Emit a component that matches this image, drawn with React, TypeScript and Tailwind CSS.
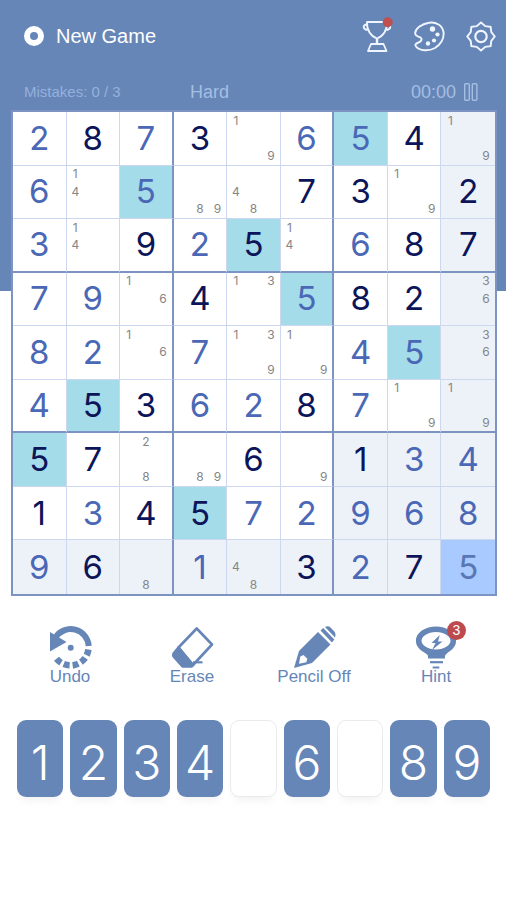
import { useState } from 'react';
import clsx from 'clsx';

// "8" = given, "2u" = entered by the player, "n19" = pencil notes 1 and 9
const PUZZLE = [
  ['2u', '8', '7u', '3', 'n19', '6u', '5u', '4', 'n19'],
  ['6u', 'n14', '5u', 'n89', 'n48', '7', '3', 'n19', '2'],
  ['3u', 'n14', '9', '2u', '5', 'n14', '6u', '8', '7'],
  ['7u', '9u', 'n16', '4', 'n13', '5u', '8', '2', 'n36'],
  ['8u', '2u', 'n16', '7u', 'n139', 'n19', '4u', '5u', 'n36'],
  ['4u', '5', '3', '6u', '2u', '8', '7u', 'n19', 'n19'],
  ['5', '7', 'n28', 'n89', '6', 'n9', '1', '3u', '4u'],
  ['1', '3u', '4', '5', '7u', '2u', '9u', '6u', '8u'],
  ['9u', '6', 'n8', '1u', 'n48', '3', '2u', '7', '5u'],
];

const DIGITS = ['1', '2', '3', '4', '5', '6', '7', '8', '9'];

const valueOf = (cell: string) => (cell.startsWith('n') ? '' : cell[0]);

const TrophyIcon = () => (
  <svg viewBox="0 0 32 32" className="w-8 h-8 overflow-visible" fill="none" stroke="currentColor" strokeWidth="1.8" strokeLinejoin="round">
    <path d="M6 2H26C26.500 10 22 16.500 16 18.500C10 16.500 5.500 10 6 2Z" />
    <path d="M6 4.500C1.500 4.500 1.500 9 6.500 10M26 4.500C30.500 4.500 30.500 9 25.500 10" />
    <path d="M16 18.500V24" strokeWidth="2.400" />
    <path d="M10 24H22.500L25.500 31H7Z" />
    <circle cx="26.700" cy="2.300" r="5" fill="#c0504f" stroke="none" />
  </svg>
);

const PaletteIcon = () => (
  <svg viewBox="0 0 32 32" className="w-8 h-8" fill="none" stroke="currentColor" strokeWidth="1.9" strokeLinejoin="round">
    <path d="M16 2.700C23 1.500 29.500 5.500 30.500 12C31.500 19 27 25 22 28C15.500 31.500 6.500 31 3 26.500C1.500 24.500 3 23.500 5.500 22.500C8.500 21.500 9.500 19 7.500 17.500C6 16.500 2.500 16.500 2.200 13.500C1.800 9 8.500 3.800 16 2.700Z" />
    <g fill="currentColor" stroke="none">
      <circle cx="19.500" cy="9" r="2.700" />
      <circle cx="24.500" cy="14.500" r="2.100" />
      <circle cx="21" cy="20.500" r="2.100" />
      <circle cx="15" cy="23.500" r="2.200" />
    </g>
  </svg>
);

const GearIcon = () => (
  <svg viewBox="0 0 32 32" className="w-8 h-8" fill="none" stroke="currentColor" strokeWidth="1.9" strokeLinejoin="miter">
    <path d="M16 2.500L20.300 6.200L25.600 6.900L26.300 12.200L29.700 16.500L26.300 20.800L25.600 26.100L20.300 26.800L16 30.500L11.700 26.800L6.400 26.100L5.700 20.800L2.300 16.500L5.700 12.200L6.400 6.900L11.700 6.200Z" />
    <circle cx="16" cy="16.500" r="5.700" strokeWidth="2.200" />
  </svg>
);

const PauseIcon = () => (
  <svg viewBox="0 0 14 18" className="w-[14px] h-[18px]" fill="none" stroke="currentColor" strokeWidth="1.4">
    <rect x="0.700" y="0.700" width="4.600" height="16.600" rx="1" />
    <rect x="8.300" y="0.700" width="4.600" height="16.600" rx="1" />
  </svg>
);

const UndoIcon = () => (
  <svg viewBox="0 0 44 42" className="w-[44px] h-[42px] overflow-visible" fill="none" stroke="currentColor">
    <path d="M7.500 12.500A18 18 0 0 1 40.700 21" strokeWidth="6" />
    <path d="M2 7V26.500L18.500 17Z" fill="currentColor" stroke="none" />
    <path d="M40.400 24.500A18 18 0 0 1 7 31.500" strokeWidth="6.500" strokeDasharray="6 3" />
    <circle cx="22.700" cy="22.700" r="3" fill="currentColor" stroke="none" />
  </svg>
);

const EraseIcon = () => (
  <svg viewBox="0 0 44 42" className="w-[44px] h-[42px] overflow-visible" fill="none" stroke="currentColor" strokeWidth="2.6" strokeLinejoin="round">
    <path d="M26.700 3.500L42 19.500L23 40L8.500 22.500Z" />
    <path d="M8.500 22.500L3.500 28.500Q2.800 30.500 4 32L12.500 41.500H21.500L23 40Z" fill="currentColor" />
    <path d="M23 37.300H32.500" strokeWidth="2.200" />
  </svg>
);

const PencilIcon = () => (
  <svg viewBox="0 0 44 42" className="w-[44px] h-[42px] overflow-visible" fill="currentColor">
    <path d="M26 7L38.500 19.500L20 38L2 43L7 26Z" />
    <path d="M28.500 5.500L31.300 3L42.300 14.500L40 17.500Z" />
    <path d="M33 2C35 0.800 37 1 38.500 2.500L42.500 6.700C43.800 8.300 43.600 10.500 43 12.500Z" />
    <path d="M8.300 31.500L11.500 30L15.300 33.800L14.300 37.300L7 38.800Z" fill="#fff" />
  </svg>
);

const HintIcon = () => (
  <svg viewBox="0 0 44 42" className="w-[44px] h-[42px] overflow-visible" fill="none" stroke="currentColor">
    <ellipse cx="22" cy="15.700" rx="17.300" ry="11.500" strokeWidth="5.600" />
    <path d="M7 24L14 30.500V33.500H31V30.500L37 24C28 30 16 30 7 24Z" fill="currentColor" stroke="none" />
    <path d="M16 37.200H29" strokeWidth="2.200" />
    <path d="M18.700 42.500H25.300" strokeWidth="2" />
    <path d="M25.800 10L17.500 18H21.500L18 25L28.500 16.500H24Z" fill="currentColor" stroke="none" />
  </svg>
);

const TOOLS = [
  { label: 'Undo', Icon: UndoIcon },
  { label: 'Erase', Icon: EraseIcon },
  { label: 'Pencil Off', Icon: PencilIcon },
  { label: 'Hint', Icon: HintIcon, badge: 3 },
];

export default function App() {
  const [board, setBoard] = useState(PUZZLE);
  const [selected, setSelected] = useState({ row: 8, col: 8 });

  const selectedValue = valueOf(board[selected.row][selected.col]);

  const enterDigit = (digit: string) => {
    const current = board[selected.row][selected.col];
    if (!current.startsWith('n') && !current.endsWith('u')) return;
    setBoard(board.map((line, r) =>
      line.map((cell, c) => (r === selected.row && c === selected.col ? `${digit}u` : cell))
    ));
  };

  const isSelected = (row: number, col: number) => row === selected.row && col === selected.col;

  const cellBackground = (row: number, col: number) => {
    if (isSelected(row, col)) return 'bg-[#a9caff]';
    if (selectedValue && valueOf(board[row][col]) === selectedValue) return 'bg-[#a4dcea]';
    const sameBox =
      Math.floor(row / 3) === Math.floor(selected.row / 3) &&
      Math.floor(col / 3) === Math.floor(selected.col / 3);
    if (row === selected.row || col === selected.col || sameBox) return 'bg-[#edf2f9]';
    return 'bg-white';
  };

  const cellColor = (row: number, col: number) => {
    if (isSelected(row, col)) return 'text-[#5877b4]';
    return board[row][col].endsWith('u') ? 'text-[#4a68b5]' : 'text-[#0c1559]';
  };

  const isComplete = (digit: string) =>
    board.flat().filter(cell => valueOf(cell) === digit).length === 9;

  return (
    <div className="min-h-screen bg-white pb-8 font-['Liberation_Sans',Arial,sans-serif]">
      <header className="bg-[#6686b7] pt-5 pb-[189px]">
        <div className="flex items-center justify-between pl-6 pr-[9px]">
          <button className="flex items-center gap-3 text-xl text-white">
            <span className="w-5 h-5 rounded-full border-[6px] border-white" />
            New Game
          </button>
          <div className="flex items-center gap-5 text-[#f0f6ff]">
            <button aria-label="Trophies"><TrophyIcon /></button>
            <button aria-label="Themes"><PaletteIcon /></button>
            <button aria-label="Settings"><GearIcon /></button>
          </div>
        </div>

        <div className="flex items-center pl-6 pr-7 mt-[30px] leading-5 text-[#a5bee2]">
          <span className="w-[166px] text-[15px] text-[#95b0dc]">Mistakes: 0 / 3</span>
          <span className="text-lg leading-5">Hard</span>
          <button className="flex items-center gap-2 ml-auto text-lg leading-5" title="Pause">
            00:00
            <PauseIcon />
          </button>
        </div>
      </header>

      {/* Board */}
      <main className="-mt-[181px] pl-[11px] pr-[9px]">
        <div className="grid grid-cols-9 grid-rows-9 aspect-square border-2 border-[#7d94c2] font-[Inter,sans-serif]">
          {board.map((line, row) =>
            line.map((cell, col) => (
              <button
                key={`${row}-${col}`}
                onClick={() => setSelected({ row, col })}
                className={clsx(
                  'min-w-0 min-h-0',
                  col === 8 ? '' : col % 3 === 2 ? 'border-r-2 border-r-[#7d94c2]' : 'border-r border-r-[#cdd7f0]',
                  row === 8 ? '' : row % 3 === 2 ? 'border-b-2 border-b-[#7d94c2]' : 'border-b border-b-[#cdd7f0]',
                  cellBackground(row, col)
                )}
              >
                {cell.startsWith('n') ? (
                  <span className="grid grid-cols-3 grid-rows-3 w-full h-full place-items-center text-xs leading-none text-[#858585]">
                    {DIGITS.map(d => (
                      <span key={d}>{cell.includes(d) ? d : ''}</span>
                    ))}
                  </span>
                ) : (
                  <span className={clsx('block text-[33px] leading-none', cellColor(row, col))}>
                    {cell[0]}
                  </span>
                )}
              </button>
            ))
          )}
        </div>
      </main>

      {/* Tools */}
      <div className="grid grid-cols-4 px-[9px] mt-[29px] text-[#6686b7]">
        {TOOLS.map(({ label, Icon, badge }) => (
          <button key={label} className="flex flex-col items-center text-[17px] leading-5">
            <span className="relative">
              <Icon />
              {badge && (
                <span className="absolute -top-1 -right-2 w-[19px] h-[19px] rounded-full bg-[#bd4b4d] text-sm leading-[19px] text-white">
                  {badge}
                </span>
              )}
            </span>
            {label}
          </button>
        ))}
      </div>

      {/* Number pad */}
      <div className="grid grid-cols-9 gap-[7px] pl-[17px] pr-4 mt-[33px] font-[Inter,sans-serif]">
        {DIGITS.map(digit => {
          const done = isComplete(digit);
          return (
            <button
              key={digit}
              disabled={done}
              aria-label={digit}
              onClick={() => enterDigit(digit)}
              className={clsx(
                'h-[77px] pt-2 rounded-[9px] text-5xl leading-none font-light text-white shadow-[0_8px_8px_-4px_rgba(0,0,0,0.05)]',
                done ? 'bg-white border border-[#e8ebee]' : 'bg-[#6686b7]'
              )}
            >
              {done ? '' : digit}
            </button>
          );
        })}
      </div>
    </div>
  );
}
